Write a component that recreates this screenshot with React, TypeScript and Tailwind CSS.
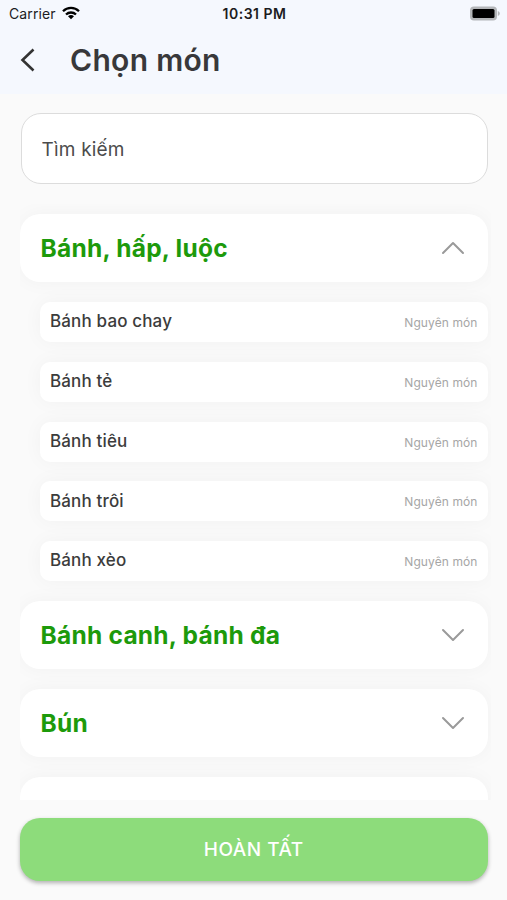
import { useState } from "react";

interface Category {
  name: string;
  dishes: string[];
}

const categories: Category[] = [
  {
    name: "Bánh, hấp, luộc",
    dishes: [
      "Bánh bao chay",
      "Bánh tẻ",
      "Bánh tiêu",
      "Bánh trôi",
      "Bánh xèo",
    ],
  },
  { name: "Bánh canh, bánh đa", dishes: [] },
  { name: "Bún", dishes: [] },
  { name: "", dishes: [] },
];

function StatusBar() {
  return (
    <div className="grid h-7 grid-cols-3 items-center pr-[7px] pl-[9px] text-[#1c1c1e]">
      <div className="-mt-[2px] flex items-center gap-[6px]">
        <span className="text-[14px] tracking-[0.1px]">Carrier</span>
        <svg className="-mt-px h-[14px] w-[18px]" viewBox="0 0 18 14">
          <g fill="none" stroke="#000" strokeWidth="2.3">
            <path d="M1 5.2a11.4 11.4 0 0 1 16 0" />
            <path d="M4 8.5a7.2 7.2 0 0 1 10 0" />
          </g>
          <path d="M9 13.2 6 10.3a4.4 4.4 0 0 1 6 0z" fill="#000" />
        </svg>
      </div>
      <span className="-mt-[2px] text-center text-[14px] font-semibold tracking-[0.5px] whitespace-nowrap">
        10:31 PM
      </span>
      <svg
        className="-mt-[2px] h-[15px] w-[31px] justify-self-end"
        viewBox="0 0 31 15"
      >
        <rect x="1" y="0.5" width="27" height="14" rx="4" fill="#b4b6b9" />
        <rect x="3.500" y="3" width="22" height="9" rx="1.5" fill="#000" />
        <path d="M28.8 5v5c1.2-.4 2-1.400 2-2.500s-.8-2.100-2-2.500z" fill="#b4b6b9" />
      </svg>
    </div>
  );
}

function Chevron({ open }: { open: boolean }) {
  return (
    <svg
      className="h-[14px] w-6"
      viewBox="0 0 24 14"
      fill="none"
      stroke="#9a9a9a"
      strokeWidth={2}
      strokeLinecap="round"
      strokeLinejoin="round"
    >
      <path d={open ? "M2 12 12 2l10 10" : "M2 2l10 10L22 2"} />
    </svg>
  );
}

function DishRow({ name }: { name: string }) {
  return (
    <li className="flex h-10 items-center justify-between rounded-[10px] bg-white px-[10px] shadow-[0_0_20px_rgba(0,0,0,0.04)]">
      <span className="text-[17px] font-[550] tracking-[0.15px] text-[#3c3c3c]">
        {name}
      </span>
      <span className="pt-[2px] text-[12px] tracking-[0.1px] text-[#a6a6a6]">
        Nguyên món
      </span>
    </li>
  );
}

export default function App() {
  const [openName, setOpenName] = useState("Bánh, hấp, luộc");

  return (
    <div className="flex h-[900px] w-[507px] flex-col overflow-hidden bg-[#fafafa] font-['Inter',sans-serif]">
      <header className="h-[94px] shrink-0 bg-[#f5f8fe]">
        <StatusBar />
        <div className="flex h-16 items-center">
          <button className="ml-5 h-6 w-4" aria-label="Back">
            <svg
              viewBox="0 0 16 24"
              fill="none"
              stroke="#333"
              strokeWidth={2.6}
            >
              <path d="M13.500 1.500 2.500 12l11 10.500" />
            </svg>
          </button>
          <h1 className="ml-[34px] text-[30px] font-semibold tracking-[0.3px] text-[#38383a]">
            Chọn món
          </h1>
        </div>
      </header>

      <div className="pr-[19.5px] pl-[20.5px] pt-[19px]">
        <input
          className="h-[71px] w-full rounded-[20px] border border-[#dcdcdc] bg-white px-5 pt-[2px] text-[19px] tracking-[0.2px] text-[#4c4c4c] outline-none placeholder:text-[#4c4c4c] placeholder:opacity-100"
          placeholder="Tìm kiếm"
        />
      </div>

      <div className="mr-[16.5px] ml-5 mt-5 flex h-[596px] shrink-0 flex-col gap-5 overflow-hidden pt-[10px] pr-[3px]">
        {categories.map((category) => {
          const open = category.name === openName;
          return (
            <section key={category.name} className="shrink-0">
              <button
                className="flex h-[68px] w-full items-center justify-between rounded-[20px] bg-white pr-[22.5px] pl-[20.5px] shadow-[0_0_20px_rgba(0,0,0,0.04)]"
                onClick={() => setOpenName(open ? "-" : category.name)}
              >
                <span className="text-[24.500px] font-[650] tracking-[0.25px] text-[#1d9a0b]">
                  {category.name}
                </span>
                <Chevron open={open} />
              </button>
              {open && (
                <ul className="mt-5 ml-5 flex flex-col gap-[19.8px]">
                  {category.dishes.map((dish) => (
                    <DishRow key={dish} name={dish} />
                  ))}
                </ul>
              )}
            </section>
          );
        })}
      </div>

      <button className="mr-[19.5px] ml-5 mt-[18px] h-[63px] shrink-0 rounded-[20px] bg-[#8ddc7b] pt-px text-[19px] font-medium tracking-[0.5px] text-white shadow-[0_2px_4px_rgba(0,0,0,0.3)]">
        HOÀN TẤT
      </button>
    </div>
  );
}
